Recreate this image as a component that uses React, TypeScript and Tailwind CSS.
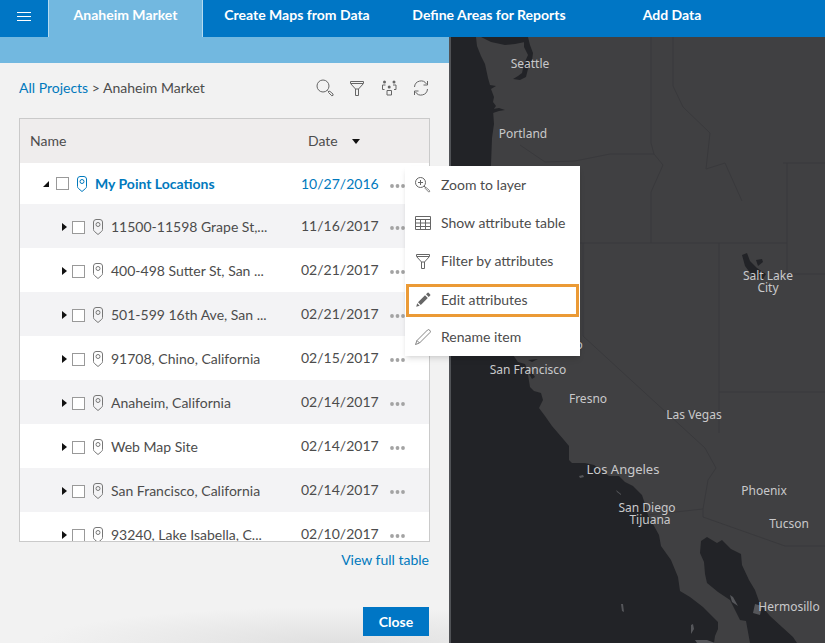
import type { ReactNode } from "react"

const places = [
  { name: "11500-11598 Grape St,...", date: "11/16/2017" },
  { name: "400-498 Sutter St, San ...", date: "02/21/2017" },
  { name: "501-599 16th Ave, San ...", date: "02/21/2017" },
  { name: "91708, Chino, California", date: "02/15/2017" },
  { name: "Anaheim, California", date: "02/14/2017" },
  { name: "Web Map Site", date: "02/14/2017" },
  { name: "San Francisco, California", date: "02/14/2017" },
  { name: "93240, Lake Isabella, C...", date: "02/10/2017" },
]

const cities = [
  { name: "Seattle", x: 530, y: 68 },
  { name: "Portland", x: 523, y: 138 },
  { name: "Salt Lake", x: 768, y: 280 },
  { name: "City", x: 768, y: 292 },
  { name: "Sacramento", x: 549, y: 349 },
  { name: "San Francisco", x: 528, y: 374 },
  { name: "Fresno", x: 588, y: 403 },
  { name: "Las Vegas", x: 694, y: 419 },
  { name: "San Diego", x: 647, y: 512 },
  { name: "Tijuana", x: 650, y: 524 },
  { name: "Phoenix", x: 764, y: 495 },
  { name: "Tucson", x: 789, y: 528 },
  { name: "Hermosillo", x: 789, y: 611 },
]

function Icon({ children }: { children: ReactNode }) {
  return (
    <svg width="18" height="18" viewBox="0 0 18 18" fill="none" stroke="currentColor" strokeWidth="1" aria-hidden="true" className="shrink-0 text-[#666]">
      {children}
    </svg>
  )
}

const funnel = <path d="M2.5 2.5h13v2l-5 5.5v6.500h-3V10l-5-5.500zM3 4.500h12M7.500 10h3" />

function Pin() {
  return (
    <svg width="10" height="16" viewBox="0 0 10 16" fill="none" stroke="currentColor" aria-hidden="true" className="shrink-0">
      <path d="M3 .5h4q2.500.3 2.500 2.500v7.500q0 1.200-1 2L5 15.500 1.500 12.500q-1-.8-1-2V3Q.500.800 3 .5z" />
      <circle cx="5" cy="5.500" r="2" />
    </svg>
  )
}

function Dots({ label }: { label: string }) {
  return (
    <button aria-label={label} className="flex h-5 items-center pl-[3px] pt-1 text-[#a3a3a3]">
      <svg width="16" height="6" viewBox="0 0 16 6" fill="currentColor" aria-hidden="true">
        <circle cx="2" cy="3" r="1.900" />
        <circle cx="7.500" cy="3" r="1.900" />
        <circle cx="13" cy="3" r="1.900" />
      </svg>
    </button>
  )
}

function Check({ label }: { label: string }) {
  return <input type="checkbox" aria-label={label} className="size-[13px] shrink-0 appearance-none border border-[#999] bg-white" />
}

function Header() {
  return (
    <header className="flex h-[37px] shrink-0 bg-[#0076c5] font-bold text-white">
      <button aria-label="Menu" className="flex w-12 shrink-0 justify-center pt-[11px]">
        <svg width="14" height="11" viewBox="0 0 14 11" stroke="currentColor" aria-hidden="true">
          <path d="M0 1.500h14M0 5.500h14M0 9.500h14" />
        </svg>
      </button>
      <nav className="flex flex-1 leading-[30px]">
        <a href="#" className="w-[155px] shrink-0 border-x border-[#b5dbf0] bg-[#72b8e0] text-center">Anaheim Market</a>
        <a href="#" className="w-[188px] text-center">Create Maps from Data</a>
        <a href="#" className="w-[196px] text-center">Define Areas for Reports</a>
        <a href="#" className="w-[170px] text-center">Add Data</a>
      </nav>
    </header>
  )
}

function ContextMenu() {
  return (
    <div className="absolute left-[386px] top-12 w-[175px] bg-white text-[#4c4c4c] shadow-md">
      <button className="flex h-[38px] w-full items-center gap-[9px] pl-[9px]">
        <Icon>
          <circle cx="6.500" cy="6.500" r="5" />
          <path d="M6.500 4v5M4 6.500h5M10 10l1.500 1.500" />
          <path d="M11.500 11l4 3.500q.800 1.500-.800 1.500L11 12.200z" strokeWidth=".8" />
        </Icon>
        Zoom to layer
      </button>
      <button className="flex h-[38px] w-full items-center gap-[9px] pl-[9px]">
        <Icon>
          <path d="M1.500 2.500h15v13h-15zM1.500 5.500h15M1.500 9h15M1.500 12.500h15M6.500 5.500v10M11.500 5.500v10" />
        </Icon>
        Show attribute table
      </button>
      <button className="flex h-[38px] w-full items-center gap-[9px] pl-[9px]">
        <Icon>{funnel}</Icon>
        Filter by attributes
      </button>
      <div className="flex h-[38px] px-px pb-px pt-1">
        <button className="flex h-full w-full items-center gap-[9px] border-3 border-[#eb9a35] pb-0.5 pl-[5px]">
          <Icon>
            <path d="M4 11.200l7-7 2.800 2.800-7 7zM12 3.300l1.600-1.500q.500-.5 1 0l1.600 1.600q.500.5 0 1l-1.500 1.600zM3.200 12.300l2.500 2.500-3.500 1z" fill="currentColor" stroke="none" />
          </Icon>
          Edit attributes
        </button>
      </div>
      <button className="flex h-[38px] w-full items-center gap-[9px] pl-[9px]">
        <Icon>
          <path d="M1.500 16.500l1.500-4L13.500 2q1-1 2.200.2 1.300 1.300.3 2.300L5.500 15zM3 12.500L5.500 15" strokeWidth=".8" />
        </Icon>
        Rename item
      </button>
    </div>
  )
}

function ProjectTable() {
  return (
    <div className="relative mx-[19px] mt-[5px]">
      <div className="h-[424px] overflow-hidden border border-[#cacaca] bg-white">
        <table className="w-full table-fixed text-[#4c4c4c]">
          <thead>
            <tr className="h-11 bg-[#efeded] text-left">
              <th className="pl-[10px] font-normal">Name</th>
              <th className="w-[86px] font-normal">
                <button className="flex items-center gap-[14px] pl-[7px]">
                  Date
                  <svg width="8" height="5" viewBox="0 0 8 5" aria-hidden="true"><path d="M0 0h8L4 5z" fill="#111" /></svg>
                </button>
              </th>
              <th className="w-[42px]"><span className="sr-only">Actions</span></th>
            </tr>
          </thead>
          <tbody>
            <tr className="h-[41px] text-[#0079bd]">
              <td>
                <div className="flex items-center pl-[23px]">
                  <svg width="6" height="6" viewBox="0 0 6 6" aria-hidden="true"><path d="M6 0v6H0z" fill="#111" /></svg>
                  <span className="ml-[7px] flex items-center gap-2">
                    <Check label="My Point Locations" />
                    <Pin />
                    <b>My Point Locations</b>
                  </span>
                </div>
              </td>
              <td>10/27/2016</td>
              <td><Dots label="Actions for My Point Locations" /></td>
            </tr>
            {places.map((place) => (
              <tr key={place.name} className="h-11 odd:bg-white even:bg-[#f3f3f5]">
                <td>
                  <div className="flex items-center gap-2 pl-[42px] pt-0.5">
                    <svg width="5" height="8" viewBox="0 0 5 8" aria-hidden="true" className="-mr-[3px] shrink-0"><path d="M0 0l5 4-5 4z" fill="#111" /></svg>
                    <Check label={place.name} />
                    <span className="flex text-[#777]"><Pin /></span>
                    <span className="whitespace-nowrap">{place.name}</span>
                  </div>
                </td>
                <td>{place.date}</td>
                <td><Dots label={"Actions for " + place.name} /></td>
              </tr>
            ))}
          </tbody>
        </table>
      </div>
      <ContextMenu />
    </div>
  )
}

function SidePanel() {
  return (
    <aside className="relative z-10 w-[449px] shrink-0 bg-[#f2f2f2] bg-[radial-gradient(ellipse_300px_36px_at_75%_100%,#e0e0e0,#f2f2f2)]">
      <div className="h-[26px] bg-[#72b8e0]" />
      <div className="flex h-[50px] items-center justify-between px-[19px] text-[#4c4c4c]">
        <p><a href="#" className="text-[#0079bd]">All Projects</a> &gt; Anaheim Market</p>
        <div className="flex gap-[14px]">
          <button aria-label="Search">
            <Icon>
              <circle cx="7" cy="7" r="6" />
              <path d="M11.500 11.500l1.500 1.500" />
              <path d="M13.500 12l3.500 3q.700 1.800-1.200 1.800L12.500 13.500z" />
            </Icon>
          </button>
          <button aria-label="Filter"><Icon>{funnel}</Icon></button>
          <button aria-label="Group">
            <Icon>
              <path d="M7 11.500h4.500v4.500H7zM5.500 6h-3v4.500h2M13 6h3v4.500h-2" />
              <g fill="currentColor" stroke="none">
                <circle cx="4.500" cy="3" r="1.500" />
                <circle cx="14" cy="3" r="1.500" />
                <circle cx="9.200" cy="8" r="1.500" />
              </g>
            </Icon>
          </button>
          <button aria-label="Refresh">
            <Icon>
              <path d="M2.500 8a6.500 6.500 0 0 1 12-3M15.500 10a6.500 6.500 0 0 1-12 3M15.500 2v4h-4M2.500 16v-4h4" />
            </Icon>
          </button>
        </div>
      </div>
      <ProjectTable />
      <div className="flex flex-col items-end px-5 pt-2">
        <a href="#" className="text-[#0079bd]">View full table</a>
        <button className="mt-[37px] h-[29px] w-[66px] bg-[#0076c5] font-bold text-white">Close</button>
      </div>
    </aside>
  )
}

function BaseMap() {
  return (
    <section aria-label="Map" className="min-w-0 flex-1 border-l-2 border-[#505256] bg-[#222327]">
      <svg viewBox="451 37 374 606" preserveAspectRatio="xMinYMin slice" className="block size-full">
        <path
          fill="#404042"
          d="M476 37L477 46 481 56 485 64 488 78 490 85 496 86 491 89 494 97 493 102 496 106 493 110 494 124 492 138 491 165 488 190 481 215 477 250 484 285 494 320 505 345 513 355 518 362 525 364 527 369 530 387 534 391 541 393 543 400 539 408 545 416 552 426 564 440 569 446 569 460 572 463 585 463 594 465 601 470 609 476 619 476 625 482 633 486 642 495 645 504 648 515 659 535 661 546 671 560 678 577 680 591 690 597 703 607 718 622 718 629 715 636 714 643H750L746 621 740 620 730 600 718 592 707 583 705 574 704 562 700 553 701 541 707 537 717 543 722 540 731 549 741 554 742 565 749 580 755 590 760 604 770 616 782 627 793 637 797 643H825V37z"
        />
        <g fill="#222327">
          <path d="M481 37h44v5l-10 2-10 1-14-3zM524 37h4l2 8 3 8-1 8-4 8-2 8-6 3-7-1 5-3 4-3 2-9 4-9-4-8zM493 109l6-1 6 2-6 1-6 2zM528 360l10-1-6 3zM531 371l4 6-3 2-3-5zM742 255l5-2 3 8 7 7 9 6-3 5-9-1-9-12zM756 260l6-1 1 3-5 4z" />
        </g>
        <g fill="#55565a">
          <path d="M579 476l4-1 1 2-4 1zM616 490l5 4v1l-4-3zM621 604l2 0 1 8-2-1zM691 625l2-1 1 5-3 5zM730 595l3 2 5 9-6-4zM755 604l7 2-2 9-7-2zM695 640l12 0 8 3h-18z" />
        </g>
        <g fill="none" stroke="#39393c">
          <path d="M651 37V143l3 11H610L575 161 545 162 520 145M654 154L663 165 651 192V243M673 37V86L683 107 710 133 706 169 725 163 742 201M787 163V243M493 243H787M783 163h42M787 243V274H825M719 243V392H825M719 392V433M583 243V336L705 448 716 468 708 480 703 509 703 517 785 546H825M648 515L703 509" />
        </g>
        <g fill="#c9c9cb" textAnchor="middle" fontFamily="'Noto Sans', sans-serif" fontSize="12">
          {cities.map((city) => (
            <text key={city.name} x={city.x} y={city.y}>{city.name}</text>
          ))}
          <text x="623" y="474" fontSize="13">Los Angeles</text>
        </g>
      </svg>
    </section>
  )
}

export default function App() {
  return (
    <div className="flex h-screen flex-col overflow-hidden font-['Lato',sans-serif] text-[14px] leading-5">
      <Header />
      <main className="flex min-h-0 flex-1">
        <SidePanel />
        <BaseMap />
      </main>
    </div>
  )
}
